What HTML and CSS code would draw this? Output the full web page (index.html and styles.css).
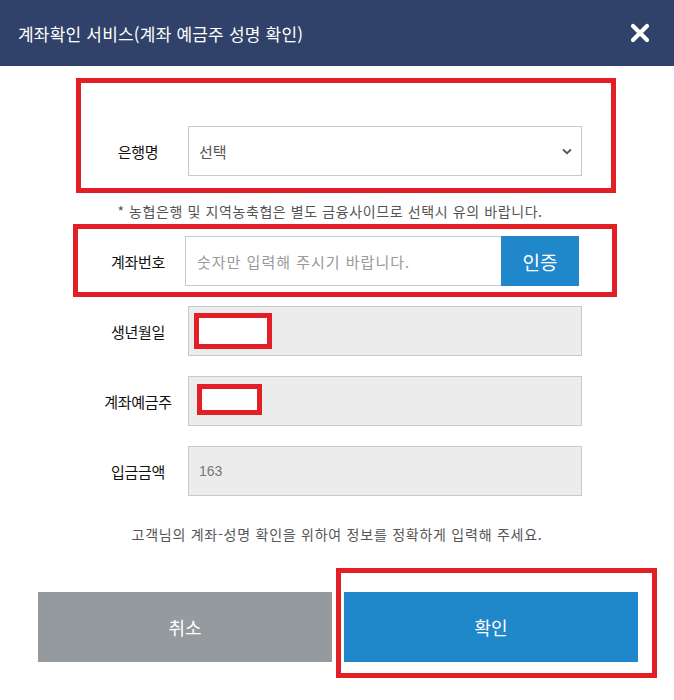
FILE: index.html
```html
<!DOCTYPE html>
<html lang="ko">
<head>
    <meta charset="UTF-8">
    <meta name="viewport" content="width=device-width, initial-scale=1.0">
    <title>계좌확인 서비스</title>
    <link rel="stylesheet" href="styles.css">
</head>
<body>
    <div class="modal">
        <header class="modal-head">
            <h1>계좌확인 서비스(계좌 예금주 성명 확인)</h1>
            <button type="button" class="close" aria-label="닫기">
                <svg width="20" height="20" viewBox="0 0 20 20"><path d="M3 3 L17 17 M17 3 L3 17" stroke="#fff" stroke-width="4.2" stroke-linecap="round"/></svg>
            </button>
        </header>

        <form class="form">
            <div class="row row-bank">
                <label class="label">은행명</label>
                <div class="field select">
                    <span>선택</span>
                    <svg width="10" height="7" viewBox="0 0 10 7"><path d="M1 1.5 L5 5.2 L9 1.5" fill="none" stroke="#555" stroke-width="1.8"/></svg>
                </div>
            </div>
            <p class="note">* 농협은행 및 지역농축협은 별도 금융사이므로 선택시 유의 바랍니다.</p>

            <div class="row">
                <label class="label" for="acct">계좌번호</label>
                <div class="account">
                    <input type="text" id="acct" placeholder="숫자만 입력해 주시기 바랍니다.">
                    <button type="button" class="verify">인증</button>
                </div>
            </div>
            <div class="row">
                <label class="label">생년월일</label>
                <div class="field readonly"><span class="mark mark-birth"></span></div>
            </div>
            <div class="row">
                <label class="label">계좌예금주</label>
                <div class="field readonly"><span class="mark mark-owner"></span></div>
            </div>
            <div class="row">
                <label class="label">입금금액</label>
                <div class="field readonly">163</div>
            </div>

            <p class="help">고객님의 계좌-성명 확인을 위하여 정보를 정확하게 입력해 주세요.</p>

            <div class="actions">
                <button type="button" class="btn cancel">취소</button>
                <button type="submit" class="btn ok">확인</button>
            </div>
        </form>

        <!-- annotation boxes -->
        <span class="mark mark-bank"></span>
        <span class="mark mark-account"></span>
        <span class="mark mark-ok"></span>
    </div>
</body>
</html>
```

FILE: styles.css
```css
:root {
    --navy: #304269;
    --blue: #2187cb;
    --grey-btn: #959a9e;
    --line: #c9c9c9;
    --mark: #e31f26;
    --text: #111;
}
* {
    box-sizing: border-box;
}
body {
    margin: 0;
    background: #fff;
    font-family: "Noto Sans CJK KR", "Noto Sans", sans-serif;
    color: var(--text);
}
.modal {
    position: relative;
    width: 674px;
    height: 700px;
    background: #fff;
}
.modal-head {
    height: 66px;
    background: var(--navy);
    display: flex;
    align-items: center;
    justify-content: space-between;
    padding: 0 24px 0 18px;
}
.modal-head h1 {
    margin: 0;
    color: #fff;
    font-size: 17px;
    font-weight: 400;
    letter-spacing: 0.2px;
}
.close {
    background: none;
    border: none;
    padding: 0;
    width: 20px;
    height: 20px;
    cursor: pointer;
}
.form {
    display: flex;
    flex-direction: column;
    padding-top: 60px;
}
.row {
    display: flex;
    align-items: center;
    height: 50px;
    padding-left: 88px;
    margin-bottom: 20px;
}
.row-bank {
    margin-bottom: 0;
}
.label {
    width: 100px;
    text-align: center;
    font-size: 15px;
    font-weight: 400;
    letter-spacing: -0.3px;
}
.field {
    position: relative;
    width: 394px;
    height: 50px;
    border: 1px solid var(--line);
    display: flex;
    align-items: center;
    padding: 0 10px;
    font-size: 15px;
}
.select {
    justify-content: space-between;
    color: #555;
    padding: 0 9px 0 10px;
}
.readonly {
    background: #ececec;
    color: #777;
    font-family: "Liberation Sans", "Noto Sans CJK KR", sans-serif;
    font-size: 14px;
}
.note,
.help {
    margin: 0;
    text-align: center;
    font-size: 14px;
    line-height: 20px;
    color: #555;
}
.note {
    margin: 25px 0 15px;
    padding-right: 14px;
    letter-spacing: 0.6px;
}
.help {
    margin: 8px 0 48px;
    letter-spacing: 0.75px;
}
.account {
    display: flex;
    width: 394px;
    height: 50px;
    margin-left: -3px;
}
.account input {
    flex: 1;
    height: 50px;
    border: 1px solid var(--line);
    border-right: none;
    padding: 0 11px;
    font-family: inherit;
    font-size: 15px;
    letter-spacing: 1px;
    outline: none;
}
.account input::placeholder {
    color: #999;
}
.verify {
    width: 78px;
    height: 50px;
    border: none;
    background: var(--blue);
    color: #fff;
    font-family: inherit;
    font-size: 19px;
}
.actions {
    display: flex;
    gap: 12px;
    padding: 0 36px 0 38px;
}
.btn {
    flex: 1;
    height: 70px;
    border: none;
    color: #fff;
    font-family: inherit;
    font-size: 18px;
    cursor: pointer;
}
.cancel {
    background: var(--grey-btn);
}
.ok {
    background: var(--blue);
}
.mark {
    position: absolute;
    border: 5px solid var(--mark);
    background: transparent;
}
.mark-birth,
.mark-owner {
    background: #fff;
}
.mark-bank {
    left: 76px;
    top: 78px;
    width: 540px;
    height: 115px;
}
.mark-account {
    left: 73px;
    top: 224px;
    width: 544px;
    height: 73px;
}
.mark-ok {
    left: 336px;
    top: 568px;
    width: 321px;
    height: 110px;
}
.mark-birth {
    left: 5px;
    top: 6px;
    width: 78px;
    height: 36px;
}
.mark-owner {
    left: 8px;
    top: 7px;
    width: 65px;
    height: 31px;
}
```
